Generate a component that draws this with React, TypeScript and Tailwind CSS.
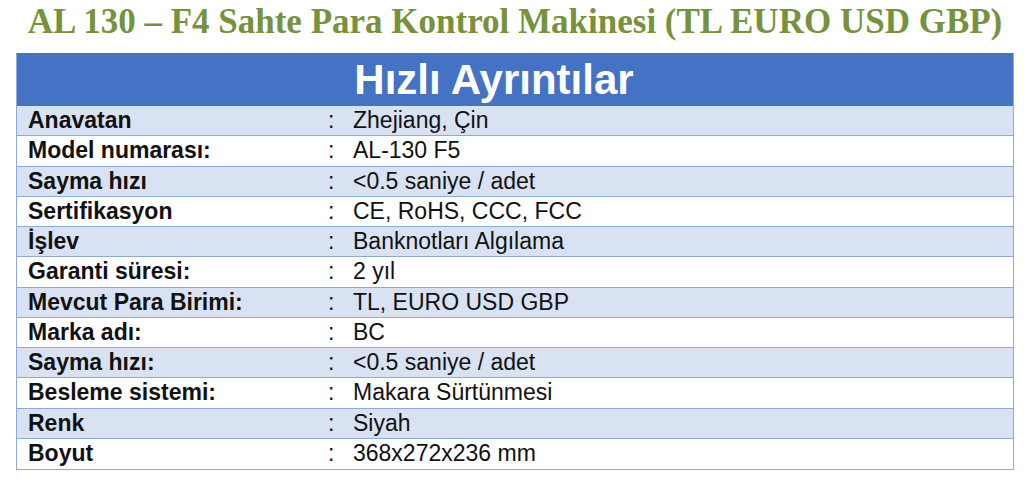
import React from 'react';

const rows: [string, string][] = [
    ['Anavatan', 'Zhejiang, Çin'],
    ['Model numarası:', 'AL-130 F5'],
    ['Sayma hızı', '<0.5 saniye / adet'],
    ['Sertifikasyon', 'CE, RoHS, CCC, FCC'],
    ['İşlev', 'Banknotları Algılama'],
    ['Garanti süresi:', '2 yıl'],
    ['Mevcut Para Birimi:', 'TL, EURO USD GBP'],
    ['Marka adı:', 'BC'],
    ['Sayma hızı:', '<0.5 saniye / adet'],
    ['Besleme sistemi:', 'Makara Sürtünmesi'],
    ['Renk', 'Siyah'],
    ['Boyut', '368x272x236 mm'],
];

const App: React.FC = () => {
    return (
        <div className="w-[1024px] h-[479px] bg-white overflow-hidden">
            {/* Title */}
            <div className="h-[53px] pt-[4px] pl-[6px] text-center font-['Liberation_Serif',serif] font-bold text-[35px] leading-none text-[#76923c] whitespace-nowrap">
                AL 130 – F4 Sahte Para Kontrol Makinesi (TL EURO USD GBP)
            </div>

            {/* Table */}
            <div className="ml-[16px] w-[998px] border-x border-b border-[#8eaadb] font-['Liberation_Sans',Arial,sans-serif]">
                <div className="h-[53px] bg-[#4472c4] flex items-center justify-center pr-[42px] text-white font-bold text-[42px] leading-none">
                    Hızlı Ayrıntılar
                </div>
                {rows.map(([label, value], i) => (
                    <div
                        key={i}
                        className={`h-[30.25px] flex items-center border-b border-[#8eaadb] last:border-b-0 text-[23px] leading-none text-[#111] ${
                            i % 2 === 0 ? 'bg-[#d9e2f3]' : 'bg-white'
                        }`}
                    >
                        <div className="w-[311px] pl-[11px] font-bold">{label}</div>
                        <div className="w-[25px]">:</div>
                        <div>{value}</div>
                    </div>
                ))}
            </div>
        </div>
    );
};

export default App;
